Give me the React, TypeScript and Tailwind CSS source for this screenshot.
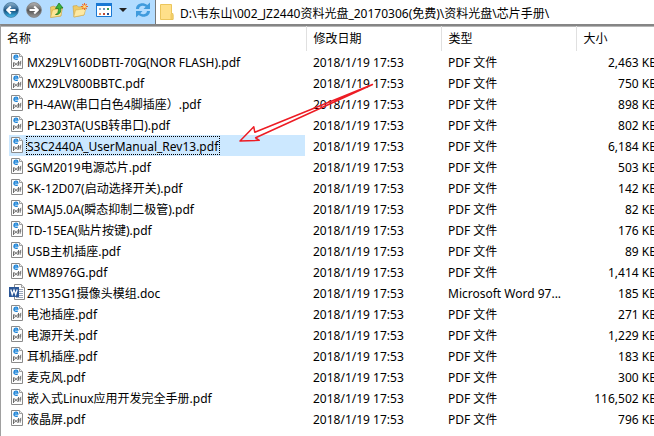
import React from "react";

type FileKind = "pdf" | "doc";

interface FileRow {
  name: string;
  size: string;
  kind: FileKind;
  selected?: boolean;
}

const files: FileRow[] = [
  { name: "MX29LV160DBTI-70G(NOR FLASH).pdf", size: "2,463 KB", kind: "pdf" },
  { name: "MX29LV800BBTC.pdf", size: "750 KB", kind: "pdf" },
  { name: "PH-4AW(串口白色4脚插座）.pdf", size: "898 KB", kind: "pdf" },
  { name: "PL2303TA(USB转串口).pdf", size: "802 KB", kind: "pdf" },
  { name: "S3C2440A_UserManual_Rev13.pdf", size: "6,184 KB", kind: "pdf", selected: true },
  { name: "SGM2019电源芯片.pdf", size: "503 KB", kind: "pdf" },
  { name: "SK-12D07(启动选择开关).pdf", size: "142 KB", kind: "pdf" },
  { name: "SMAJ5.0A(瞬态抑制二极管).pdf", size: "82 KB", kind: "pdf" },
  { name: "TD-15EA(贴片按键).pdf", size: "176 KB", kind: "pdf" },
  { name: "USB主机插座.pdf", size: "89 KB", kind: "pdf" },
  { name: "WM8976G.pdf", size: "1,414 KB", kind: "pdf" },
  { name: "ZT135G1摄像头模组.doc", size: "185 KB", kind: "doc" },
  { name: "电池插座.pdf", size: "271 KB", kind: "pdf" },
  { name: "电源开关.pdf", size: "1,229 KB", kind: "pdf" },
  { name: "耳机插座.pdf", size: "183 KB", kind: "pdf" },
  { name: "麦克风.pdf", size: "300 KB", kind: "pdf" },
  { name: "嵌入式Linux应用开发完全手册.pdf", size: "116,502 KB", kind: "pdf" },
  { name: "液晶屏.pdf", size: "796 KB", kind: "pdf" },
];

function PdfIcon() {
  return (
    <svg width="16" height="16" viewBox="0 0 16 16" className="shrink-0" aria-hidden="true">
      <path d="M2.5.5h8l3 3v12h-11z" fill="#fdfdfd" stroke="#8a8a8a" />
      <path d="M10.5.5v3h3" fill="#ededed" stroke="#a0a0a0" />
      <path d="M4.800 4h4.100C8.700 1.500 5 1.700 4.900 4.200c0 2.300 2.400 2.500 3.800 1.700" fill="none" stroke="#1c84d8" strokeWidth="1.300" />
      <g fill="none" stroke="#606060" strokeWidth=".9">
        <path d="M4.500 14V9.500M4.500 9.900h1q1 0 1 1.200t-1 1.200h-1" />
        <path d="M9.500 8v4.300H8.600q-1 0-1-1.200t1-1.200h.9" />
        <path d="M11.200 12.700V9q0-.8 1.100-.8M10.500 10h1.800" />
      </g>
    </svg>
  );
}

function WordIcon() {
  return (
    <svg width="16" height="16" viewBox="0 0 16 16" className="shrink-0" aria-hidden="true">
      <path d="M5.500.5h7l3 3v12h-10z" fill="#fff" stroke="#8b8b8b" />
      <path d="M12.500.5v3h3" fill="#eee" stroke="#a0a0a0" />
      <path d="M10 5.500h4M10 7.500h4M10 9.500h4M10 11.500h4M7 13.500h7" stroke="#9aa5ba" />
      <path d="M0 3h10v10H0z" fill="#2b5797" />
      <path d="M1.800 5.500l1.400 5L5 6l1.700 4.500 1.500-5" fill="none" stroke="#fff" strokeWidth="1.300" />
    </svg>
  );
}

function RoundArrow({ forward }: { forward?: boolean }) {
  const id = forward ? "forward-ball" : "back-ball";
  return (
    <svg width="16" height="16" viewBox="0 0 16 16" aria-hidden="true">
      <defs>
        <linearGradient id={id} x1="0" y1="0" x2="0" y2="1">
          <stop offset="0" stopColor={forward ? "#b5b5b5" : "#8fb4cd"} />
          <stop offset=".45" stopColor={forward ? "#6b6b6b" : "#2d6390"} />
          <stop offset=".5" stopColor={forward ? "#505050" : "#124674"} />
          <stop offset="1" stopColor={forward ? "#9b9b9b" : "#3fc0f2"} />
        </linearGradient>
      </defs>
      <circle cx="8" cy="8" r="7.400" fill={`url(#${id})`} stroke={forward ? "#808080" : "#46779c"} strokeWidth=".8" />
      <path
        d={forward ? "M3.500 8h8M8.200 4.500L11.800 8l-3.600 3.500" : "M12.500 8h-8M7.800 4.500L4.200 8l3.600 3.500"}
        fill="none"
        stroke="#fff"
        strokeWidth="2"
      />
    </svg>
  );
}

function FolderUpIcon() {
  return (
    <svg width="16" height="16" viewBox="0 0 16 16" aria-hidden="true">
      <path d="M1.500 5l3.500-1 1 1 6-1v10l-10 1.200z" fill="#eecb66" stroke="#c7a044" strokeWidth=".6" />
      <path d="M3.500 8l10-2-1.700 8-10.300 1.500z" fill="#fbe596" stroke="#d1a742" strokeWidth=".6" />
      <path d="M6.500 12.500c2.500-.5 3-3 2.900-6H6.500L10 1l4 5h-2.200c.3 4-1 7-5.300 6.500z" fill="#3cb53c" stroke="#16701c" strokeWidth=".7" />
    </svg>
  );
}

function NewFolderIcon() {
  return (
    <svg width="16" height="16" viewBox="0 0 16 16" aria-hidden="true">
      <path d="M1 4l4-.5L6.500 5 12 4.500V13l-10 2z" fill="#eecb66" stroke="#c7a044" strokeWidth=".6" />
      <path d="M3.500 8L14 6.500 12 13 1.700 15z" fill="#fde9a3" stroke="#d5ae50" strokeWidth=".6" />
      <path d="M12.500 1v7M9 4.500h7M10.300 2.200l4.400 4.600M14.700 2.200l-4.400 4.600" stroke="#ef6a2d" strokeWidth="1.100" />
      <circle cx="12.500" cy="4.500" r="1.500" fill="#ffdf79" />
    </svg>
  );
}

function ViewIcon() {
  return (
    <svg width="16" height="16" viewBox="0 0 16 16" aria-hidden="true">
      <path d="M.5 1.500h15v13H.5z" fill="#fff" stroke="#1978d4" />
      <path d="M0 1h16v3H0z" fill="#1978d4" />
      <path d="M3 6h2v2H3z" fill="#8badd0" />
      <path d="M7 6h2v2H7z" fill="#6b93b8" />
      <path d="M11 6h2v2h-2z" fill="#3c9c50" />
      <path d="M3 11h2v2H3z" fill="#e08a60" />
      <path d="M7 11h2v2H7z" fill="#c04a34" />
      <path d="M11 11h2v2h-2z" fill="#264f91" />
    </svg>
  );
}

function RefreshIcon() {
  return (
    <svg width="16" height="16" viewBox="0 0 16 16" aria-hidden="true">
      <path d="M1 7C1 1.500 8-.5 12.300 3L15 .5V7H8.500l2.200-2.300C8 2.800 4.500 3.500 4 7z" fill="#409bdd" />
      <path d="M15 9c0 5.500-7 7.500-11.300 4L1 15.500V9h6.500l-2.200 2.300C8 13.200 11.500 12.500 12 9z" fill="#409bdd" />
    </svg>
  );
}

function FolderIcon() {
  return (
    <svg width="14" height="18" viewBox="0 0 14 18" className="shrink-0" aria-hidden="true">
      <path d="M.5 1.500h11v9l1.500 1v5H.5z" fill="#ffe08a" stroke="#ecc65c" />
      <path d="M11.500 10.500h1.500v6h-2v-5z" fill="#f5d36f" stroke="#e6bd50" strokeWidth=".6" />
    </svg>
  );
}

function AnnotationArrow() {
  return (
    <svg
      className="pointer-events-none absolute left-[238px] top-[82px]"
      width="138"
      height="64"
      viewBox="0 0 138 64"
      aria-hidden="true"
    >
      <path
        d="M134.500 2.500L16.800 50.300l-1-5.500L2 59l19.300-.7-3.700-2.500z"
        fill="none"
        stroke="#ed1c24"
        strokeWidth="1.500"
        strokeLinejoin="round"
      />
    </svg>
  );
}

const toolButton = "flex h-5 w-4 items-center justify-center";
const headCell = "border-r border-[#e0e0e0] p-0 font-normal";

export default function App() {
  return (
    <main className="relative min-h-screen w-full overflow-hidden bg-white font-['Noto_Sans','Noto_Sans_CJK_SC',sans-serif] text-xs text-black">
      <header className="flex h-6 bg-[#b3dcff]">
        <nav aria-label="工具栏" className="flex h-5 w-[155px] shrink-0 items-center pl-[3px]">
          <button type="button" aria-label="后退" className={toolButton}><RoundArrow /></button>
          <button type="button" aria-label="前进" className={`${toolButton} ml-[7px]`}><RoundArrow forward /></button>
          <button type="button" aria-label="向上" className={`${toolButton} ml-[7px]`}><FolderUpIcon /></button>
          <button type="button" aria-label="新建文件夹" className={`${toolButton} ml-[7px]`}><NewFolderIcon /></button>
          <button type="button" aria-label="查看" className={`${toolButton} ml-2`}><ViewIcon /></button>
          <button type="button" aria-label="查看选项" className={`${toolButton} ml-[3px]`}>
            <svg width="8" height="4" viewBox="0 0 8 4" aria-hidden="true"><path d="M0 0h8L4 4z" fill="#222" /></svg>
          </button>
          <button type="button" aria-label="刷新" className={`${toolButton} ml-1`}><RefreshIcon /></button>
        </nav>
        <div className="flex min-w-0 flex-1 items-center border-l border-[#777] bg-white pl-1">
          <FolderIcon />
          <input
            aria-label="地址"
            className="ml-[6px] h-5 min-w-0 flex-1 bg-transparent pt-px outline-none"
            defaultValue={"D:\\韦东山\\002_JZ2440资料光盘_20170306(免费)\\资料光盘\\芯片手册\\"}
          />
        </div>
      </header>

      <section className="min-h-[calc(100vh-24px)] overflow-hidden border-l border-t-2 border-[#a0a0a0] border-t-[#858585]">
        <table className="w-[calc(100%+9px)] min-w-[540px] table-fixed border-collapse border-t border-[#b5b5b5]">
          <colgroup>
            <col />
            <col className="w-[135px]" />
            <col className="w-[135px]" />
            <col className="w-[87px]" />
          </colgroup>
          <thead>
            <tr className="h-6 text-left">
              <th scope="col" className={`${headCell} pl-[6px]`}>名称</th>
              <th scope="col" className={`${headCell} pl-[7px]`}>修改日期</th>
              <th scope="col" className={`${headCell} pl-[7px]`}>类型</th>
              <th scope="col" className="p-0 pl-[7px] font-normal">大小</th>
            </tr>
          </thead>
          <tbody>
            {files.map((file) => (
              <tr key={file.name} className="h-[21px] whitespace-nowrap leading-[19px]" aria-selected={file.selected}>
                <td className="p-0 pl-2">
                  <div className={file.selected ? "mr-px flex h-[21px] items-center bg-[#cce8ff]" : "mr-px flex h-[21px] items-center"}>
                    {file.kind === "pdf" ? <PdfIcon /> : <WordIcon />}
                    <span className={file.selected ? "ml-px h-[19px] border border-dotted border-black pr-px leading-[19px]" : "ml-[2px] pt-[2px]"}>
                      {file.name}
                    </span>
                  </div>
                </td>
                <td className="p-0 pl-[7px] pt-[2px]">2018/1/19 17:53</td>
                <td className="p-0 pl-[7px] pt-[2px]">{file.kind === "pdf" ? "PDF 文件" : "Microsoft Word 97..."}</td>
                <td className="p-0 pr-[6px] pt-[2px] text-right">{file.size}</td>
              </tr>
            ))}
          </tbody>
        </table>
      </section>

      <AnnotationArrow />
    </main>
  );
}
